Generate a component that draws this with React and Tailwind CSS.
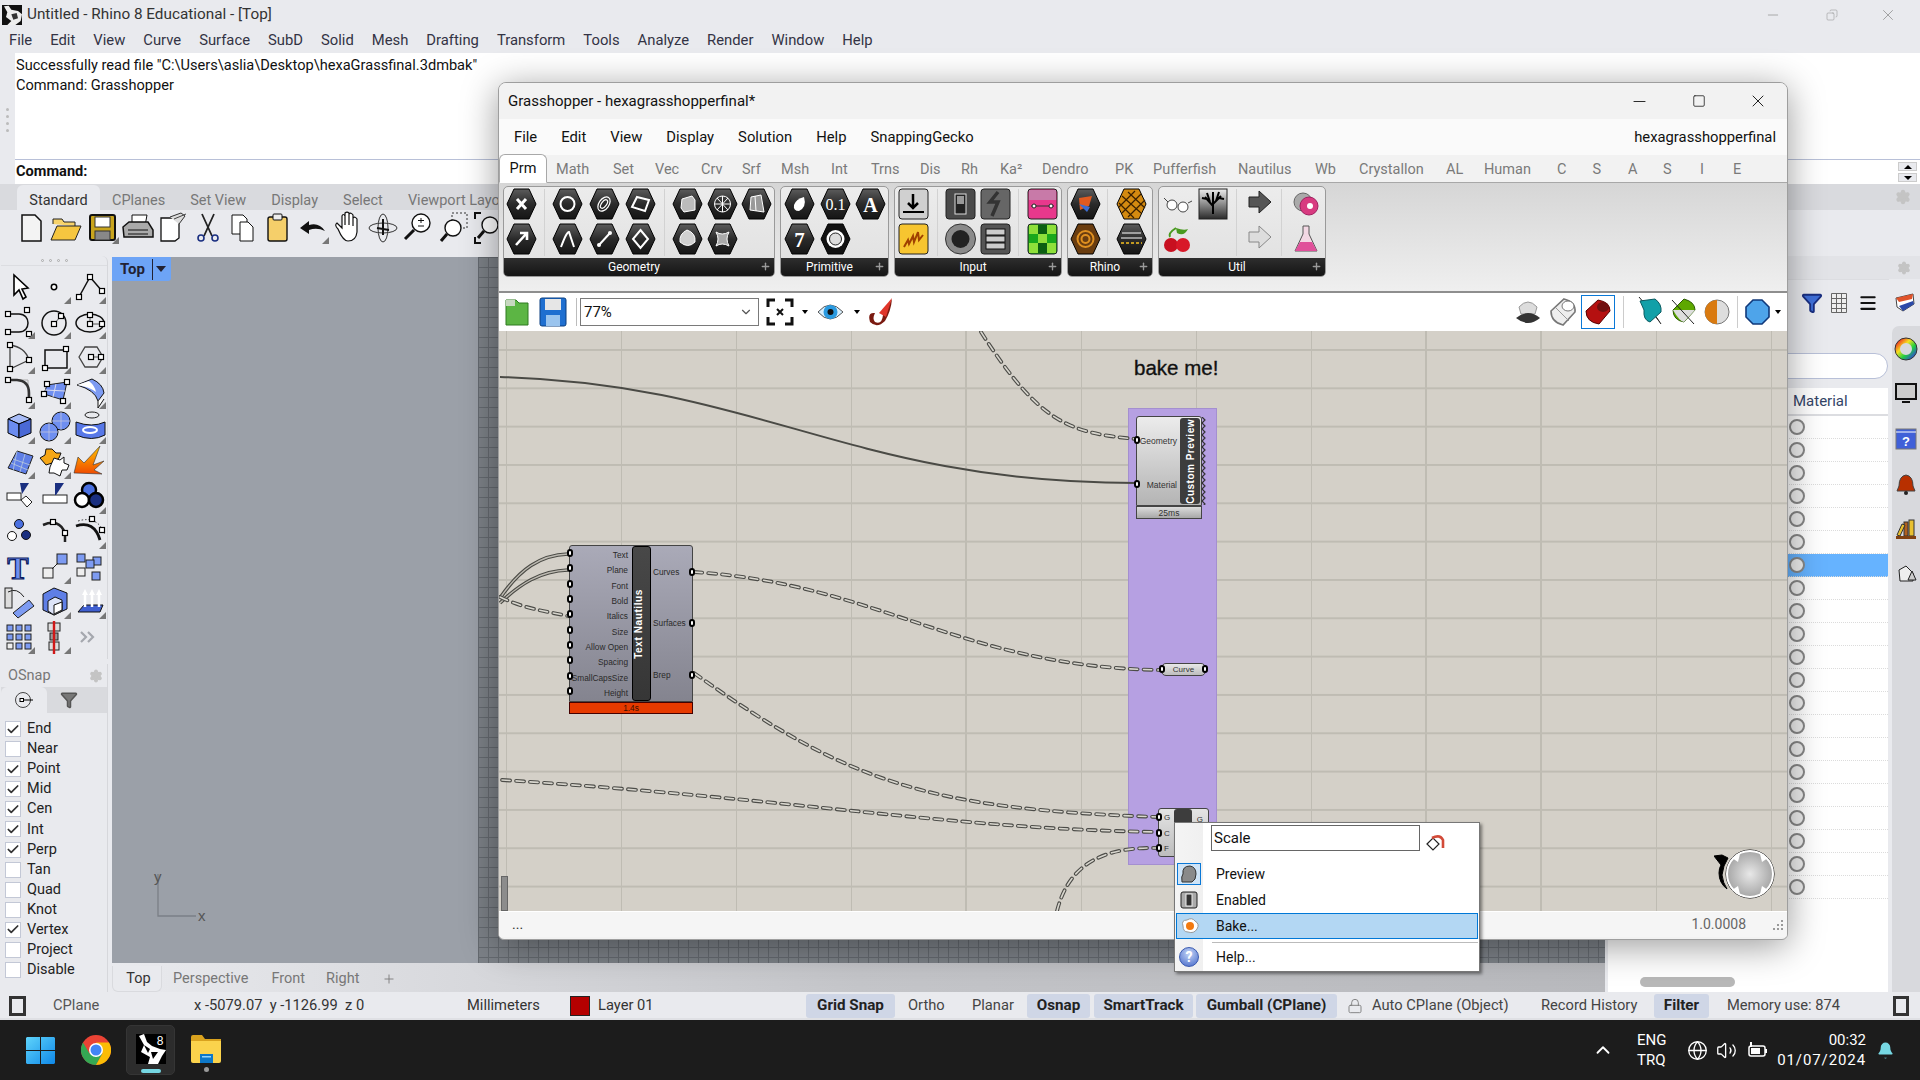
import { Minus, Square, X, Copy, ChevronUp, ChevronDown, Settings, Check, Filter, Menu as MenuIcon, Lock, Plus, Volume2, Globe, Bell } from "lucide-react";

const N = ({ x, y, s = 5 }) => <rect x={x - s / 2} y={y - s / 2} width={s} height={s} fill="#fff" stroke="#000" strokeWidth="1.2" />;
const S = { fill: "none", stroke: "#111", strokeWidth: 1.5 };

const leftIcons = [
  [0, <path d="M13 5V25L18 20L22 29L25 27L21 19L27 18Z" fill="#fff" stroke="#000" strokeWidth="1.6" />],
  [1, <circle cx="17" cy="17" r="2.7" fill="#fff" stroke="#000" strokeWidth="1.5" />],
  [1, <><path d="M7 27L18 7L30 21" {...S} /><N x={7} y={27} /><N x={18} y={7} /><N x={30} y={21} /></>],
  [1, <><path d="M7 9H18C30 9 30 27 18 27H7" {...S} /><N x={7} y={9} /><N x={7} y={27} /><N x={26} y={5} /><N x={28} y={29} /></>],
  [1, <><circle cx="17" cy="18" r="12" {...S} /><path d="M17 19L24 11" stroke="#555" /><N x={17} y={19} /><N x={24} y={11} /></>],
  [1, <><ellipse cx="18" cy="18" rx="14" ry="9" {...S} /><path d="M18 10V19H30" stroke="#555" fill="none" /><N x={18} y={10} /><N x={18} y={19} /><N x={30} y={19} /></>],
  [1, <><path d="M9 5Q24 7 28 20L9 29Z" fill="none" stroke="#444" strokeWidth="1.3" /><N x={9} y={5} /><N x={28} y={20} /><N x={9} y={29} /></>],
  [1, <><rect x="8" y="10" width="22" height="18" {...S} /><N x={29} y={9} /><N x={8} y={28} /></>],
  [1, <><path d="M7 17L13 7H25L31 17L25 27H13Z" fill="none" stroke="#444" strokeWidth="1.3" /><path d="M19 17H29" stroke="#555" /><N x={19} y={17} /><N x={29} y={17} /></>],
  [1, <><path d="M7 5H27V24" fill="none" stroke="#aaa" /><path d="M7 5H16Q28 6 28 18V25" fill="none" stroke="#333" strokeWidth="2.5" /><N x={7} y={5} /><N x={28} y={25} /></>],
  [1, <><path d="M10 10L30 7L26 25L7 19Z" fill="#6f8ff0" stroke="#222" /><path d="M19 9L16 22M8 15L28 16" stroke="#dde" /><N x={10} y={9} /><N x={30} y={7} /><N x={26} y={26} /><N x={7} y={19} /></>],
  [1, <><path d="M5 10L20 4Q31 9 32 18L26 26Q23 15 5 10Z" fill="#7d9bf2" stroke="#111" /><path d="M5 10L17 6Q23 11 24 17Q18 12 5 10Z" fill="#fff" /><path d="M26 26V33L32 24" fill="#fff" stroke="#111" /></>],
  [1, <><path d="M7 9L18 4L30 9L18 14Z" fill="#a8bcf7" stroke="#000" /><path d="M7 9L18 14V28L7 23Z" fill="#6b8cf0" stroke="#000" /><path d="M30 9L18 14V28L30 23Z" fill="#4a69d6" stroke="#000" /></>],
  [1, <><circle cx="24" cy="11" r="9" fill="#6f8ff0" stroke="#111" /><circle cx="12" cy="22" r="9" fill="#6f8ff0" stroke="#111" /><path d="M24 2V20M15 11H33M12 13V31M3 22H21" stroke="#ccd" strokeWidth=".7" /></>],
  [1, <><ellipse cx="20" cy="5" rx="7" ry="3" fill="none" stroke="#222" /><path d="M4 12Q20 18 33 12V25Q20 32 4 25Z" fill="#5878e8" stroke="#111" /><ellipse cx="18" cy="20" rx="7" ry="3" fill="none" stroke="#fff" strokeWidth="2" /></>],
  [1, <><path d="M7 23L16 6L32 11L25 29Z" fill="#5f7fe6" stroke="#222" /><path d="M12 14L29 20M16 6L12 26M24 9L19 27M10 18L27 25" stroke="#bcd" strokeWidth=".8" /></>],
  [1, <><path d="M3 13L8 10L9 4L15 4L19 8L24 8L22 13L15 18L9 20Z" fill="#f5a615" stroke="#111" /><path d="M17 13L23 15L27 12L27 18L32 20L30 25L25 25L23 31L17 28L12 28L13 22Z" fill="#fff" stroke="#111" /></>],
  [0, <><defs><linearGradient id="xp" x1="0" y1="0" x2="0" y2="1"><stop offset="0" stopColor="#ffc200" /><stop offset="1" stopColor="#f04a00" /></linearGradient></defs><path d="M2 28L6 12L12 18L28 1L21 20L32 16L22 25L30 29Z" fill="url(#xp)" stroke="#333" strokeWidth=".6" /></>],
  [0, <><rect x="6" y="13" width="14" height="7" fill="#fff" stroke="#222" /><path d="M19 3H28L21 14Z" fill="#1a2f80" /><path d="M20 20L25 16L31 22L26 27Z" fill="#fff" stroke="#222" /></>],
  [0, <><rect x="6" y="15" width="24" height="8" fill="#fff" stroke="#222" /><path d="M18 3H27L19 15H18Z" fill="#1a2f80" /></>],
  [1, <><circle cx="17" cy="10" r="7" fill="#4a70e0" stroke="#000" strokeWidth="2.5" /><circle cx="10" cy="20" r="7" fill="#fff" stroke="#000" strokeWidth="2.5" /><circle cx="24" cy="20" r="7" fill="#1a2f80" stroke="#000" strokeWidth="2.5" /></>],
  [0, <><circle cx="18" cy="9" r="4.5" fill="#4a70e0" stroke="#111" /><circle cx="11" cy="21" r="4.5" fill="#fff" stroke="#111" /><circle cx="25" cy="20" r="4.5" fill="#1a2f80" stroke="#111" /></>],
  [0, <><path d="M6 10Q22 3 28 18L28 27" fill="none" stroke="#222" strokeWidth="2.5" /><N x={16} y={7} /><N x={28} y={18} /></>],
  [1, <><path d="M4 11Q22 5 28 25" fill="none" stroke="#111" strokeWidth="2.8" /><path d="M6 6Q26 0 33 20" fill="none" stroke="#333" strokeDasharray="1.5 2" /><N x={20} y={4} /><N x={30} y={15} /></>],
  [0, <text x="17" y="29" textAnchor="middle" fontFamily="Liberation Serif" fontWeight="700" fontSize="32" fill="#6f8ff0" stroke="#0a1a60" strokeWidth="1.2">T</text>],
  [1, <><rect x="6" y="18" width="10" height="10" fill="#eee" stroke="#222" /><rect x="20" y="4" width="10" height="10" fill="#7d9bf2" stroke="#222" /><path d="M15 19L21 13" stroke="#222" /></>],
  [0, <><rect x="5" y="4" width="8" height="8" fill="#7d9bf2" stroke="#222" /><rect x="21" y="7" width="8" height="8" fill="#7d9bf2" stroke="#222" /><rect x="14" y="10" width="8" height="8" fill="#7d9bf2" stroke="#222" /><rect x="5" y="18" width="8" height="8" fill="#eee" stroke="#222" /><rect x="20" y="22" width="8" height="8" fill="#7d9bf2" stroke="#222" /></>],
  [0, <><rect x="4" y="3" width="7" height="20" fill="#ddd" stroke="#222" /><path d="M7 7Q16 2 23 12" fill="none" stroke="#222" /><path d="M12 28L28 15L33 21L17 33Z" fill="#7d9bf2" stroke="#222" /></>],
  [1, <><path d="M6 9L17 3L30 8V24L17 30L6 25Z" fill="#5f7fe6" stroke="#111" /><path d="M11 16L18 12L25 15V26L17 30L11 26Z" fill="#dde4f8" stroke="#111" /><path d="M17 20L25 17V25L17 29Z" fill="#fff" stroke="#111" /></>],
  [1, <><path d="M6 27L12 20H31L28 27Z" fill="#3f5fd0" stroke="#111" /><path d="M13 22V8M20 22V8M27 22V8" stroke="#fff" strokeWidth="2.5" /><path d="M10 10L13 4L16 10ZM17 10L20 4L23 10ZM24 10L27 4L30 10Z" fill="#fff" /></>],
  [1, <><g fill="#7d9bf2" stroke="#222"><rect x="6" y="5" width="6" height="6" /><rect x="15" y="5" width="6" height="6" /><rect x="24" y="5" width="6" height="6" /><rect x="6" y="14" width="6" height="6" /><rect x="15" y="14" width="6" height="6" /><rect x="24" y="14" width="6" height="6" /><rect x="15" y="23" width="6" height="6" /><rect x="24" y="23" width="6" height="6" /></g><rect x="6" y="23" width="6" height="6" fill="#eee" stroke="#222" /></>],
  [1, <><rect x="11" y="3" width="12" height="8" fill="#ddd" stroke="#222" /><rect x="13" y="13" width="8" height="7" fill="#999" stroke="#222" /><rect x="12" y="22" width="10" height="8" fill="#ddd" stroke="#222" /><path d="M17 1V34" stroke="#d01818" strokeWidth="2.4" /></>],
  [0, <path d="M9 12L14 17L9 22M16 12L21 17L16 22" fill="none" stroke="#a5a8ae" strokeWidth="2.2" />],
];

const topIcons = [
  [0, <path d="M7 5H20L26 11V31H7Z" fill="#f3f3f3" stroke="#111" strokeWidth="1.5" />],
  [0, <><path d="M3 14V9H12L14 12H25V16" fill="#f7d36a" stroke="#222" /><path d="M1 30L7 16H31L25 30Z" fill="#f5c640" stroke="#222" /></>],
  [1, <><rect x="5" y="5" width="25" height="25" rx="2" fill="#c9a51d" stroke="#111" strokeWidth="2" /><rect x="10" y="7" width="15" height="10" fill="#fff" stroke="#333" /><rect x="10" y="21" width="15" height="9" fill="#888" stroke="#333" /></>],
  [0, <><path d="M12 5H27L25 16H12Z" fill="#fff" stroke="#111" /><path d="M3 17L9 12H28L33 20V27H4Z" fill="#aaa" stroke="#111" strokeWidth="1.5" /><path d="M8 20H28M8 24H28" stroke="#111" /></>],
  [0, <><path d="M6 8H24V28L20 31H6Z" fill="#fff" stroke="#111" strokeWidth="1.3" /><path d="M15 7L26 3L30 6L24 14" fill="#ddd" stroke="#333" /><path d="M19 9L31 4" stroke="#444" /></>],
  [0, <><path d="M12 4L22 26M24 4L14 26" stroke="#222" strokeWidth="1.8" /><circle cx="11" cy="28" r="3" fill="none" stroke="#1a2f80" strokeWidth="1.6" /><circle cx="25" cy="28" r="3" fill="none" stroke="#1a2f80" strokeWidth="1.6" /></>],
  [0, <><path d="M7 5H18L22 9V24H7Z" fill="#fff" stroke="#111" /><path d="M15 12H23L28 17V31H15Z" fill="#fff" stroke="#111" /></>],
  [0, <><rect x="8" y="7" width="19" height="24" rx="2" fill="#f5cf6a" stroke="#111" strokeWidth="1.4" /><rect x="13" y="4" width="9" height="6" rx="1" fill="#eee" stroke="#111" /></>],
  [1, <><path d="M5 18L14 11V15Q24 12 30 21Q22 17 14 20V24Z" fill="#111" /></>],
  [0, <path d="M8 19Q4 15 7 13L12 18V6Q13 3 15 6V15V3Q17 1 19 3V15V4Q21 2 23 5V16V8Q25 6 27 9V22Q26 31 18 31Q13 31 8 19Z" fill="#fff" stroke="#111" strokeWidth="1.2" />],
  [0, <><ellipse cx="18" cy="18" rx="14" ry="5" fill="none" stroke="#333" /><ellipse cx="18" cy="18" rx="5" ry="14" fill="none" stroke="#333" /><path d="M18 9V25M12 18L24 20" stroke="#111" strokeWidth="2" /></>],
  [0, <><circle cx="21" cy="13" r="9" fill="#fff" stroke="#111" strokeWidth="1.4" /><path d="M14 20L5 29" stroke="#111" strokeWidth="3" /><path d="M21 8V13M18 10.5H24M18 16H24" stroke="#111" /></>],
  [0, <><rect x="17" y="3" width="15" height="15" fill="none" stroke="#333" strokeDasharray="2 2" /><circle cx="18" cy="18" r="8" fill="#fff" stroke="#111" strokeWidth="1.4" /><path d="M12 24L6 31" stroke="#111" strokeWidth="3" /></>],
  [0, <><circle cx="20" cy="15" r="8" fill="#fff" stroke="#111" strokeWidth="1.4" /><path d="M14 21L8 28" stroke="#111" strokeWidth="3" /><path d="M5 9V3H11M35 9V3H29M5 27V33H11M35 27V33H29" fill="none" stroke="#111" strokeWidth="2" /></>],
];

function Ico({ icon, size = 35 }) {
  return (
    <svg width={size} height={size} viewBox="0 0 35 35">
      {icon[1]}
      {icon[0] ? <path d="M34 27V34H27Z" fill="#777" /> : null}
    </svg>
  );
}

function Hex({ children }) {
  return (
    <svg width="31" height="32" viewBox="0 0 31 32">
      <path d="M8 1H23L30 16L23 31H8L1 16Z" fill="url(#hexdark)" stroke="#000" strokeWidth="1" />
      {children}
    </svg>
  );
}

const W = { fill: "none", stroke: "#fff", strokeWidth: 2 };
const Sq = ({ children, bg = "url(#sqdark)" }) => (
  <svg width="31" height="32" viewBox="0 0 31 32">
    <rect x="1" y="1" width="29" height="30" rx="3" fill={bg} stroke="#222" />
    {children}
  </svg>
);

function RibbonGroup({ label, width, children }) {
  return (
    <div className={`${width} h-[91px] flex flex-col rounded-[5px] border border-[#9a9a9a] overflow-hidden bg-linear-to-b from-[#ececec] to-[#e0e0e0]`}>
      <div className="flex-1 relative flex">{children}</div>
      <div className="h-[18px] bg-linear-to-b from-[#2e2e2e] to-[#151515] flex items-center justify-center pr-[10px] relative">
        <span className="text-white text-[12px] leading-none">{label}</span>
        <span className="absolute right-[3px] top-[3px] text-[#9a9a9a]"><Plus size={11} strokeWidth={3} /></span>
      </div>
    </div>
  );
}

// one column of ribbon icons, two rows
function Col({ a, b, w = "w-[35px]" }) {
  return (
    <div className={`${w} flex flex-col items-center pt-[1px] gap-[3px]`}>
      <div className="h-[32px]">{a}</div>
      <div className="h-[32px]">{b}</div>
    </div>
  );
}
const Div = () => <div className="w-px bg-[#d2d2d2] my-[2px] mx-[5px]" />;

const wires = [
  "M981 333C1040 425 1070 434 1136 440",
  "M694 573C880 585 960 668 1161 671",
  "M694 674C850 785 930 810 1158 818",
  "M502 781C800 800 950 830 1158 833",
  "M1057 912C1070 860 1110 848 1158 849",
  "M500 598C525 610 545 612 568 617",
];

function Port({ cls }) {
  return <span className={`absolute w-[6px] h-[8px] rounded-full bg-white border-2 border-black ${cls}`} />;
}

const zigzag = "M1 0" + Array.from({ length: 15 }, (_, i) => `L4 ${i * 6 + 3}L1 ${i * 6 + 6}`).join("");

function Canvas() {
  return (
    <div className="h-[580px] relative overflow-hidden bg-[#d4d0c8] bg-[linear-gradient(to_right,#bfbcb3_2px,transparent_2px),linear-gradient(to_bottom,#bfbcb3_2px,transparent_2px)] bg-size-[115px_38.33px] bg-position-[6px_18px]">
      {/* purple group */}
      <div className="absolute left-[629px] top-[77px] w-[89px] h-[457px] bg-[#b6a0e2] border border-[#a48fd0]" />
      <svg className="absolute inset-0" width="1288" height="580" viewBox="499 332 1288 580">
        <path d="M500 378C760 385 850 484 1136 484" fill="none" stroke="#4a4a45" strokeWidth="2" />
        <path d="M500 599C520 570 540 556 568 555" fill="none" stroke="#4a4a45" strokeWidth="3.6" />
        <path d="M500 599C520 570 540 556 568 555" fill="none" stroke="#bdbab2" strokeWidth="1.4" />
        <path d="M500 604C520 585 540 572 568 571" fill="none" stroke="#4a4a45" strokeWidth="3.6" />
        <path d="M500 604C520 585 540 572 568 571" fill="none" stroke="#bdbab2" strokeWidth="1.4" />
        {wires.map((d) => (
          <g key={d} fill="none" strokeDasharray="8 6" strokeLinecap="round">
            <path d={d} stroke="#4c4c48" strokeWidth="3.8" />
            <path d={d} stroke="#d8d6ce" strokeWidth="1.6" />
          </g>
        ))}
      </svg>

      <span className="absolute left-[635px] top-[25px] text-[20.5px] leading-[24px] font-['Liberation_Sans',sans-serif] text-[#111] [-webkit-text-stroke:0.35px_#111]">bake me!</span>

      {/* Custom Preview node */}
      <div className="absolute left-[637px] top-[85px] w-[66px] h-[103px] text-[#333] text-[8.5px] font-['Liberation_Sans',sans-serif]">
        <div className="h-[90px] rounded-t-[3px] border border-[#444] bg-linear-to-b from-[#ececec] to-[#b4b4b4] relative">
          <span className="absolute right-[24px] top-[18px]">Geometry</span>
          <span className="absolute right-[24px] top-[62px]">Material</span>
          <div className="absolute right-[1px] top-[1px] bottom-[1px] w-[20px] bg-[#3d3d3d] rounded-[3px] flex items-center justify-center">
            <span className="[writing-mode:vertical-rl] rotate-180 whitespace-nowrap text-white font-bold text-[10px] tracking-[0.5px]">Custom Preview</span>
          </div>
          <Port cls="-left-[3px] top-[19px]" />
          <Port cls="-left-[3px] top-[63px]" />
          <svg className="absolute -right-[5px] top-0" width="5" height="88" viewBox="0 0 5 88"><path d={zigzag} fill="none" stroke="#333" strokeWidth="1.2" /></svg>
        </div>
        <div className="h-[13px] border border-[#444] bg-linear-to-b from-[#dcdcdc] to-[#a8a8a8] text-center leading-[12px]">25ms</div>
      </div>

      {/* Text Nautilus node */}
      <div className="absolute left-[70px] top-[214px] w-[124px] text-[8.3px] text-[#2a2a2a] font-['Liberation_Sans',sans-serif]">
        <div className="h-[157px] relative rounded-t-[3px] border border-[#444] bg-linear-to-b from-[#aaaab8] to-[#84848f]">
          <div className="absolute right-[64px] top-[2px] flex flex-col items-end">
            {["Text", "Plane", "Font", "Bold", "Italics", "Size", "Allow Open", "Spacing", "SmallCapsSize", "Height"].map((t) => (
              <span key={t} className="h-[15.35px] leading-[15px]">{t}</span>
            ))}
          </div>
          {[3, 18, 34, 49, 64, 80, 95, 110, 126, 141].map((t) => (
            <span key={t} className="absolute -left-[3px] w-[6px] h-[8px] rounded-full bg-white border-2 border-black" style={{ top: t }} />
          ))}
          <div className="absolute left-[62px] top-0 bottom-0 w-[19px] bg-linear-to-b from-[#484848] to-[#363636] border border-black rounded-[3px] flex items-center justify-center">
            <span className="[writing-mode:vertical-rl] rotate-180 whitespace-nowrap text-white font-bold text-[10px] tracking-[0.6px] pl-[6px]">Text Nautilus</span>
          </div>
          <span className="absolute left-[83px] top-[20px]">Curves</span>
          <span className="absolute left-[83px] top-[71px]">Surfaces</span>
          <span className="absolute left-[83px] top-[123px]">Brep</span>
          <Port cls="-right-[3px] top-[22px]" />
          <Port cls="-right-[3px] top-[73px]" />
          <Port cls="-right-[3px] top-[125px]" />
        </div>
        <div className="h-[12px] border border-[#400] bg-[#e63a00] text-center leading-[11px] text-[#3a1000]">1.4s</div>
      </div>

      {/* Curve param */}
      <div className="absolute left-[662px] top-[332px] w-[45px] h-[13px] rounded-[5px] border border-[#444] bg-linear-to-b from-[#e8e8e8] to-[#bdbdbd] text-center leading-[11px] text-[8px] text-[#333] font-['Liberation_Sans',sans-serif]">
        Curve
        <Port cls="-left-[3px] top-[1px]" />
        <Port cls="-right-[3px] top-[1px]" />
      </div>

      {/* Scale node, mostly under the menu */}
      <div className="absolute left-[659px] top-[477px] w-[51px] h-[49px] rounded-[3px] border border-[#444] bg-linear-to-b from-[#e4e4e4] to-[#bdbdbd] text-[8px] text-[#333] font-['Liberation_Sans',sans-serif]">
        <span className="absolute left-[5px] top-[3px]">G</span>
        <span className="absolute left-[5px] top-[19px]">C</span>
        <span className="absolute left-[5px] top-[34px]">F</span>
        <span className="absolute right-[5px] top-[5px]">G</span>
        <div className="absolute left-[15px] top-0 bottom-0 w-[18px] bg-[#3d3d3d] rounded-[3px]" />
        <Port cls="-left-[3px] top-[4px]" />
        <Port cls="-left-[3px] top-[20px]" />
        <Port cls="-left-[3px] top-[35px]" />
      </div>

      {/* navigation dial */}
      <svg className="absolute left-[1215px] top-[510px]" width="62" height="62" viewBox="0 0 62 62">
        <defs>
          <radialGradient id="dial"><stop offset="0" stopColor="#e8e8e8" /><stop offset="1" stopColor="#a4a4a4" /></radialGradient>
        </defs>
        <path d="M0 15L8 14L14 17L10 25L8 34Q9 42 13 48Q5 42 5 32Q5 27 7 24Z" fill="#000" strokeWidth="1" stroke="#000" />
        <circle cx="36" cy="33" r="24" fill="url(#dial)" stroke="#000" strokeWidth="1" />
        <circle cx="36" cy="33" r="23" fill="none" stroke="#fff" strokeWidth="2" />
        <path d="M46 13L54 17L48 21ZM18 17L26 13L24 21ZM54 49L46 53L48 45ZM18 49L26 53L24 45Z" fill="#fff" />
      </svg>

      <div className="absolute left-[2px] top-[545px] w-[7px] h-[35px] bg-[#8c8c8c] border border-[#666]" />
    </div>
  );
}

function GrasshopperWindow() {
  const tabs = [
    ["Math", "w-[57px]"], ["Set", "w-[42px]"], ["Vec", "w-[46px]"], ["Crv", "w-[41px]"], ["Srf", "w-[39px]"], ["Msh", "w-[50px]"],
    ["Int", "w-[40px]"], ["Trns", "w-[49px]"], ["Dis", "w-[41px]"], ["Rh", "w-[39px]"], ["Ka²", "w-[42px]"], ["Dendro", "w-[73px]"],
    ["PK", "w-[38px]"], ["Pufferfish", "w-[85px]"], ["Nautilus", "w-[77px]"], ["Wb", "w-[44px]"], ["Crystallon", "w-[87px]"], ["AL", "w-[38px]"],
    ["Human", "w-[73px]"], ["C", "w-[35.5px]"], ["S", "w-[35.5px]"], ["A", "w-[35px]"], ["S", "w-[37px]"], ["I", "w-[33px]"], ["E", ""],
  ];
  return (
    <div className="absolute left-[498px] top-[82px] w-[1290px] h-[858px] flex flex-col rounded-t-[8px] rounded-b-[6px] border border-[#9e9e9e] bg-[#f2f2f2] shadow-[0_6px_36px_rgba(0,0,0,0.4)] overflow-hidden text-[#111]">
      <div className="h-[36px] flex items-center justify-between pl-[9px] bg-[#f2f2f2]">
        <span className="text-[15px]">Grasshopper - hexagrasshopperfinal*</span>
        <div className="flex items-center text-[#222]">
          <span className="w-[59px] flex justify-center"><Minus size={19} strokeWidth={1.2} /></span>
          <span className="w-[59px] flex justify-center"><Square size={14} strokeWidth={1.4} /></span>
          <span className="w-[59px] flex justify-center"><X size={20} strokeWidth={1.2} /></span>
        </div>
      </div>
      <div className="h-[36px] flex items-center justify-between pl-[15px] pr-[11px] bg-[#fafafa] text-[14.8px]">
        <div className="flex gap-[24px]">
          {["File", "Edit", "View", "Display", "Solution", "Help", "SnappingGecko"].map((m) => <span key={m}>{m}</span>)}
        </div>
        <span>hexagrasshopperfinal</span>
      </div>
      <div className="h-[28px] flex items-end bg-[#f2f2f2] relative border-b border-[#a8a8a8]">
        <div className="w-[48px] h-[29px] -mb-px bg-white rounded-t-[6px] border border-[#a8a8a8] border-b-white flex items-center justify-center text-[14.5px] z-10">Prm</div>
        <div className="flex items-center h-[28px] pl-[9px] pt-[4px] text-[14.5px] text-[#7a7a7a]">
          {tabs.map(([t, m], i) => <span key={i} className={`${m} shrink-0`}>{t}</span>)}
        </div>
      </div>
      <div className="h-[110px] flex gap-[5px] pl-[4px] pt-[3px] bg-linear-to-b from-[#d6d6d6] to-[#efefef] border-b-2 border-[#8e8e8e]">
        <RibbonGroup label="Geometry" width="w-[272px]">
          <Col a={<Hex><path d="M11 11L20 21M20 11L11 21" {...W} strokeWidth="3" /></Hex>} b={<Hex><path d="M10 22L20 11M14 10H21V17" {...W} strokeWidth="2.6" /></Hex>} />
          <Div />
          <Col w="w-[37px]" a={<Hex><circle cx="15.5" cy="16" r="7" {...W} /></Hex>} b={<Hex><path d="M9 24Q15 8 17 9L22 24" {...W} /></Hex>} />
          <Col w="w-[37px]" a={<Hex><ellipse cx="15" cy="16" rx="5" ry="8" transform="rotate(35 15 16)" {...W} strokeWidth="1.2" /><ellipse cx="15" cy="16" rx="2.5" ry="5" transform="rotate(35 15 16)" {...W} strokeWidth="1.2" /></Hex>} b={<Hex><path d="M10 22L21 10" {...W} /><circle cx="10" cy="22" r="2" fill="#fff" /><circle cx="21" cy="10" r="2" fill="#fff" /></Hex>} />
          <Col w="w-[37px]" a={<Hex><path d="M12 9L24 12L20 23L7 19Z" {...W} /></Hex>} b={<Hex><path d="M15.5 7L23 16L15.5 25L8 16Z" {...W} /></Hex>} />
          <Div />
          <Col a={<Hex><path d="M10 11L20 8L23 12V22L12 24L9 20Z" fill="#bbb" stroke="#fff" /></Hex>} b={<Hex><path d="M15 7Q24 10 23 19Q16 26 8 19Q7 11 15 7Z" fill="#d0d0d0" stroke="#fff" /></Hex>} />
          <Col a={<Hex><circle cx="15.5" cy="16" r="8" {...W} strokeWidth="1" /><path d="M8 16H23M15.5 8V24M10 10L21 22M21 10L10 22" stroke="#fff" strokeWidth="1" /></Hex>} b={<Hex><path d="M9 9Q15 13 22 9Q18 16 22 23Q15 19 9 23Q13 16 9 9Z" fill="#aaa" stroke="#fff" /></Hex>} />
          <Col a={<Hex><path d="M10 9L20 7L23 24L9 22Z" fill="#999" stroke="#fff" /><path d="M14 8L15 23" stroke="#fff" /></Hex>} b={null} />
        </RibbonGroup>
        <RibbonGroup label="Primitive" width="w-[109px]">
          <Col w="w-[36px]" a={<Hex><path d="M20 9Q23 19 15 23Q9 23 10 17Q12 11 20 9Z" fill="#fff" /></Hex>} b={<Hex><text x="15.5" y="24" textAnchor="middle" fontSize="21" fontWeight="700" fill="#fff" fontFamily="Liberation Serif">7</text></Hex>} />
          <Col w="w-[36px]" a={<Hex><text x="15.5" y="22" textAnchor="middle" fontSize="16" fill="#fff" fontFamily="Liberation Serif">0.1</text></Hex>} b={<svg width="31" height="32" viewBox="0 0 31 32"><path d="M8 1H23L30 16L23 31H8L1 16Z" fill="#111" stroke="#000" /><circle cx="15.5" cy="16" r="9" fill="#fff" /><circle cx="15.5" cy="16" r="6" fill="#ddd" stroke="#222" /></svg>} />
          <Col w="w-[34px]" a={<Hex><text x="15.5" y="24" textAnchor="middle" fontSize="20" fontWeight="700" fill="#fff" fontFamily="Liberation Serif">A</text></Hex>} b={null} />
        </RibbonGroup>
        <RibbonGroup label="Input" width="w-[168px]">
          <Col w="w-[38px]" a={<Sq bg="#d0d0d0"><path d="M15 6V19M10 15L15 20L20 15" fill="none" stroke="#000" strokeWidth="2.5" /><path d="M5 24H26" stroke="#000" strokeWidth="2" /></Sq>} b={<Sq bg="#f7c530"><path d="M6 24L10 17L11 21L15 13L16 19L20 9L21 17L25 12" fill="none" stroke="#a04000" strokeWidth="2" /></Sq>} />
          <Div />
          <Col a={<Sq bg="#4a4a4a"><rect x="10" y="6" width="11" height="20" fill="#222" stroke="#ddd" /><rect x="12" y="8" width="7" height="8" fill="#999" /></Sq>} b={<svg width="31" height="32" viewBox="0 0 31 32"><circle cx="15.5" cy="16" r="15" fill="#8a8a8a" stroke="#333" /><circle cx="15.5" cy="16" r="9" fill="#222" /></svg>} />
          <Col a={<Sq bg="#666"><path d="M18 4L10 14H18L12 28" fill="none" stroke="#333" strokeWidth="3.5" /></Sq>} b={<Sq bg="#555"><rect x="6" y="6" width="19" height="6" fill="#ccc" stroke="#111" /><rect x="6" y="13" width="19" height="6" fill="#ccc" stroke="#111" /><rect x="6" y="20" width="19" height="6" fill="#ccc" stroke="#111" /></Sq>} />
          <Div />
          <Col w="w-[38px]" a={<Sq bg="#e8388c"><rect x="2" y="2" width="27" height="10" fill="#c87aa8" /><path d="M4 18H27" stroke="#333" /><circle cx="7" cy="18" r="2" fill="#fff" stroke="#222" /><circle cx="24" cy="18" r="2" fill="#fff" stroke="#222" /></Sq>} b={<Sq bg="#19a81c"><path d="M2 2H11V11H2ZM20 2H29V11H20ZM11 11H20V20H11ZM2 20H11V30H2ZM20 20H29V30H20Z" fill="#8fe03a" /><path d="M11 2H20V11H11ZM11 20H20V30H11Z" fill="#0c5f12" /></Sq>} />
        </RibbonGroup>
        <RibbonGroup label="Rhino" width="w-[86px]">
          <Col w="w-[34px]" a={<Hex><path d="M9 10L22 8L19 18L10 22Z" fill="#e05a20" /><path d="M9 16L20 19L17 24Z" fill="#3c6cd0" /></Hex>} b={<svg width="31" height="32" viewBox="0 0 31 32"><path d="M8 1H23L30 16L23 31H8L1 16Z" fill="#6a3d10" stroke="#000" /><circle cx="15.5" cy="16" r="8" fill="none" stroke="#e09020" strokeWidth="2" /><circle cx="15.5" cy="16" r="4" fill="none" stroke="#e09020" strokeWidth="2" /></svg>} />
          <Div />
          <Col w="w-[36px]" a={<svg width="31" height="32" viewBox="0 0 31 32"><path d="M8 1H23L30 16L23 31H8L1 16Z" fill="#d48a10" stroke="#000" /><path d="M6 8L25 25M12 4L29 20M3 15L18 30M25 6L6 25M19 3L3 19M29 12L12 29" stroke="#3a2000" strokeWidth="1.2" /></svg>} b={<Hex><path d="M6 10H25M5 15H26" stroke="#fff" /><path d="M5 20H26" stroke="#f5c020" strokeWidth="1.5" strokeDasharray="3 2" /></Hex>} />
        </RibbonGroup>
        <RibbonGroup label="Util" width="w-[168px]">
          <Col w="w-[36px]" a={<svg width="31" height="32" viewBox="0 0 31 32"><circle cx="10" cy="17" r="5" fill="#fff" stroke="#444" /><circle cx="21" cy="19" r="5" fill="#fff" stroke="#444" /><path d="M2 10L6 14M26 15L30 13" stroke="#444" /></svg>} b={<svg width="31" height="32" viewBox="0 0 31 32"><path d="M14 5Q6 10 8 14" fill="none" stroke="#4a9a20" strokeWidth="2" /><path d="M14 5Q22 8 26 6Q22 14 15 10Z" fill="#4a9a20" /><circle cx="9" cy="22" r="7" fill="#c81020" /><circle cx="21" cy="22" r="7" fill="#d81828" /></svg>} />
          <Col w="w-[36px]" a={<svg width="30" height="32" viewBox="0 0 30 32"><rect x="1" y="1" width="28" height="30" fill="url(#sqdark)" stroke="#222" /><path d="M15 26V14M15 18L7 9M15 16L23 8M12 14L9 5M18 13L21 4M9 11L4 10M21 10L26 11M15 14V4" fill="none" stroke="#000" strokeWidth="2" /></svg>} b={null} />
          <Div />
          <Col w="w-[34px]" a={<svg width="27" height="28" viewBox="0 0 27 28"><path d="M3 9H13V3L25 14L13 25V19H3Z" fill="#555" stroke="#222" /></svg>} b={<svg width="27" height="28" viewBox="0 0 27 28"><path d="M3 9H13V3L25 14L13 25V19H3Z" fill="#ddd" stroke="#888" /></svg>} />
          <Div />
          <Col w="w-[36px]" a={<svg width="31" height="32" viewBox="0 0 31 32"><circle cx="13" cy="14" r="9" fill="#aaa" stroke="#666" /><circle cx="19" cy="18" r="9" fill="#d83a80" stroke="#a02060" /><circle cx="20" cy="18" r="3" fill="#fff" /></svg>} b={<svg width="31" height="32" viewBox="0 0 31 32"><path d="M13 3H19V11L27 28H5L13 11Z" fill="#f3d8e4" stroke="#555" /><path d="M10 19H22L27 28H5Z" fill="#e0509a" /></svg>} />
        </RibbonGroup>
      </div>
      <div className="h-[38px] flex items-center bg-white pl-[6px] pr-[6px] relative">
        <svg width="24" height="30" viewBox="0 0 24 30"><path d="M1 3H11L14 6H23V28H1Z" fill="#5cb544" stroke="#2e7a20" /><path d="M1 3H10V9H1Z" fill="#c8d8c0" /></svg>
        <svg className="ml-[10px]" width="28" height="30" viewBox="0 0 28 30"><rect x="1" y="1" width="26" height="28" rx="2" fill="#1f6fd0" stroke="#0a3f80" /><rect x="6" y="2" width="16" height="11" fill="#e6e6e6" /><rect x="7" y="18" width="14" height="11" fill="#9ac4ee" /></svg>
        <div className="w-px h-[28px] bg-[#bcbcbc] ml-[9px] mr-[3px]" />
        <div className="w-[179px] shrink-0 h-[28px] border border-[#7a7a7a] flex items-center justify-between pl-[3px] pr-[5px] text-[15px]">
          77%<ChevronDown size={14} className="text-[#555]" />
        </div>
        <svg className="ml-[7px]" width="28" height="28" viewBox="0 0 28 28"><path d="M2 9V2H9M19 2H26V9M26 19V26H19M9 26H2V19" fill="none" stroke="#111" strokeWidth="3" /><path d="M11 11L17 17M17 11L11 17" stroke="#111" strokeWidth="2" /></svg>
        <span className="ml-[8px] w-0 h-0 border-x-[3px] border-t-[4px] border-x-transparent border-t-black" />
        <svg className="ml-[9px]" width="27" height="24" viewBox="0 0 27 24"><path d="M1 12Q13 -2 26 12Q13 26 1 12Z" fill="#d8eefc" stroke="#555" /><circle cx="13.5" cy="12" r="7" fill="#2a9ae0" /><circle cx="13.5" cy="12" r="3" fill="#111" /></svg>
        <span className="ml-[10px] w-0 h-0 border-x-[3px] border-t-[4px] border-x-transparent border-t-black" />
        <svg className="ml-[7px]" width="27" height="30" viewBox="0 0 27 30"><path d="M3 25Q0 15 8 16Q5 22 8 25Q15 28 16 18L25 2Q24 14 18 24Q10 32 3 25Z" fill="#7a1a10" /><path d="M12 16L25 1L19 20Z" fill="#e0352a" /></svg>
        <div className="flex-1" />
        <svg width="26" height="32" viewBox="0 0 26 32"><path d="M4 11Q13 1 22 11L20 18H6Z" fill="#dcdcdc" stroke="#999" /><path d="M1 22Q13 12 25 22Q13 32 1 22Z" fill="#333" /></svg>
        <svg className="ml-[7px]" width="30" height="32" viewBox="0 0 30 32"><path d="M3 15L16 3Q28 6 27 16L15 29Q3 26 3 15Z" fill="#eee" stroke="#777" strokeWidth="1.6" /><ellipse cx="20" cy="10" rx="6" ry="5" fill="#fff" stroke="#777" /><path d="M8 12L21 25" stroke="#999" /></svg>
        <div className="ml-[3px] w-[34px] h-[34px] border border-[#0a78d7] flex items-center justify-center">
          <svg width="30" height="30" viewBox="0 0 30 30"><path d="M3 14L15 3Q27 5 27 14L16 27Q3 25 3 14Z" fill="#b51010" stroke="#500" /><ellipse cx="20" cy="10" rx="6" ry="5" fill="#701010" /></svg>
        </div>
        <div className="w-px h-[32px] bg-[#ccc] mx-[8px]" />
        <svg className="ml-[5px]" width="26" height="32" viewBox="0 0 26 32"><path d="M2 1L20 22L24 28" stroke="#222" /><path d="M3 5L18 3Q25 8 24 16L13 26Q6 24 7 14Z" fill="#12a0a8" stroke="#0a5a60" /></svg>
        <svg className="ml-[7px]" width="26" height="32" viewBox="0 0 26 32"><path d="M3 14L14 3Q25 6 25 14L14 26Q3 24 3 14Z" fill="#5ea800" stroke="#2a5a00" /><path d="M3 14Q10 26 14 26L25 14Z" fill="#ddd" /><path d="M2 4L24 28" stroke="#222" /></svg>
        <svg className="ml-[8px]" width="26" height="30" viewBox="0 0 26 30"><circle cx="13" cy="15" r="12" fill="#ddd" stroke="#777" /><path d="M13 3A12 12 0 0 0 13 27Z" fill="#d97a10" /></svg>
        <div className="w-px h-[32px] bg-[#ccc] ml-[7px] mr-[7px]" />
        <svg width="25" height="28" viewBox="0 0 25 28"><path d="M8 2H17L24 9V19L17 26H8L1 19V9Z" fill="#4ea4ea" stroke="#10387a" strokeWidth="1.6" /></svg>
        <span className="ml-[5px] w-0 h-0 border-x-[3px] border-t-[4px] border-x-transparent border-t-black" />
      </div>
      <Canvas />
      <div className="h-[26px] bg-[#f5f5f5] flex items-center justify-between pl-[13px] pr-[4px] text-[#666] text-[14px] border-t border-white">
        <span className="text-[#333]">...</span>
        <div className="flex items-center gap-[27px]">
          <span>1.0.0008</span>
          <svg width="10" height="10" viewBox="0 0 10 10"><g fill="#999"><rect x="8" y="0" width="2" height="2" /><rect x="4" y="4" width="2" height="2" /><rect x="8" y="4" width="2" height="2" /><rect x="0" y="8" width="2" height="2" /><rect x="4" y="8" width="2" height="2" /><rect x="8" y="8" width="2" height="2" /></g></svg>
        </div>
      </div>
    </div>
  );
}

function ContextMenu() {
  return (
    <div className="absolute left-[1174px] top-[822px] w-[306px] h-[150px] bg-white border border-[#777] shadow-[2px_2px_3px_rgba(0,0,0,0.45)] text-[14px] text-[#111] flex">
      <div className="w-[28px] bg-linear-to-r from-[#f4f4f4] to-[#f0f0f0]" />
      <div className="absolute inset-0 flex flex-col">
        <div className="h-[37px] flex items-start pl-[36px] pt-[2px]">
          <div className="w-[209px] h-[26px] border border-[#666] flex items-center pl-[2px] text-[15px] bg-white">Scale</div>
          <svg className="ml-[5px] mt-[10px]" width="20" height="18" viewBox="0 0 20 18"><path d="M2 9L8 3L14 9L8 15Z" fill="#fff" stroke="#222" strokeWidth="1.2" /><path d="M7 3Q15 -1 18 5V13" fill="none" stroke="#d24a38" strokeWidth="2.6" /></svg>
        </div>
        <div className="h-[26px] mt-[1px] flex items-center pl-[2px]">
          <div className="w-[24px] h-[22px] border border-[#0a78d7] bg-[#cfe4f7] flex items-center justify-center">
            <svg width="20" height="20" viewBox="0 0 20 20"><path d="M3 18Q2 12 4 10Q3 2 11 2Q17 3 17 10Q17 16 13 18Z" fill="#8a8a8a" stroke="#333" /></svg>
          </div>
          <span className="ml-[15px]">Preview</span>
        </div>
        <div className="h-[26px] flex items-center pl-[5px]">
          <svg width="18" height="18" viewBox="0 0 18 18"><rect x="1" y="1" width="16" height="16" rx="2" fill="#aaa" stroke="#222" /><rect x="6" y="3" width="6" height="12" fill="#333" stroke="#eee" /></svg>
          <span className="ml-[18px]">Enabled</span>
        </div>
        <div className="h-[26px] mx-[1px] flex items-center pl-[3px] bg-[#b3d7f3] border border-[#0078d7]">
          <svg width="20" height="18" viewBox="0 0 20 18"><path d="M3 9Q1 3 7 3Q12 0 15 4Q20 7 17 12Q14 17 8 15Q3 15 3 9Z" fill="#fff" stroke="#999" /><circle cx="10" cy="9" r="4" fill="#f27a10" /></svg>
          <span className="ml-[16px]">Bake...</span>
        </div>
        <div className="h-px bg-[#bbb] ml-[37px] mr-[1px] mt-[3px]" />
        <div className="flex-1 flex items-center pl-[4px]">
          <span className="w-[20px] h-[20px] rounded-full bg-[radial-gradient(circle_at_50%_30%,#c4d6f7,#4467c8)] text-white font-bold text-[14px] flex items-center justify-center border border-[#3a5ab0]">?</span>
          <span className="ml-[17px]">Help...</span>
        </div>
      </div>
    </div>
  );
}

function Taskbar() {
  return (
    <div className="h-[60px] bg-[#1c1c1c] flex items-center text-white shrink-0 pl-[26px] pr-[25px]">
      <svg width="29" height="29" viewBox="0 0 29 29">
        <defs><linearGradient id="win" x1="0" y1="0" x2="1" y2="1"><stop offset="0" stopColor="#5fd4fb" /><stop offset="1" stopColor="#0f88e8" /></linearGradient></defs>
        <path d="M1 1H14V14H0V2ZM15 1H28L29 2V14H15ZM0 15H14V28H1L0 27ZM15 15H29V27L28 28H15Z" fill="url(#win)" />
      </svg>
      <svg className="ml-[26px]" width="30" height="30" viewBox="0 0 30 30">
        <circle cx="15" cy="15" r="15" fill="#ea4335" />
        <path d="M2 7.5A15 15 0 0 0 15 30L21.5 18.5H8.5Z" fill="#34a853" />
        <path d="M15 30A15 15 0 0 0 28 7.5H15L21.5 18.5Z" fill="#fbbc05" />
        <circle cx="15" cy="15" r="7" fill="#fff" />
        <circle cx="15" cy="15" r="5.5" fill="#4285f4" />
      </svg>
      <div className="ml-[15px] w-[49px] h-[50px] bg-[#2c2c2c] rounded-[5px] border border-[#353535] flex flex-col items-center pt-[8px]">
        <RhinoMark />
        <span className="mt-[5px] w-[20px] h-[4px] bg-[#76d7e3] rounded-full" />
      </div>
      <div className="ml-[16px] w-[30px] h-[50px] flex flex-col items-center pt-[9px]">
        <svg width="30" height="30" viewBox="0 0 30 30">
          <path d="M0 3Q0 1 2 1H11L14 5H30V8H0Z" fill="#d9a21e" />
          <path d="M0 7H30V27Q30 29 28 29H2Q0 29 0 27Z" fill="#fbd34c" />
          <rect x="9" y="20" width="13" height="9" fill="#0d78c9" />
          <rect x="11" y="22" width="9" height="1.5" fill="#8fd4ff" />
        </svg>
        <span className="mt-[3px] w-[5px] h-[5px] rounded-full bg-[#9a9a9a]" />
      </div>
      <div className="flex-1" />
      <ChevronUp size={22} strokeWidth={2} className="mr-[23px]" />
      <div className="flex flex-col text-[15px] leading-[20px] w-[43px]"><span>ENG</span><span>TRQ</span></div>
      <Globe size={21} strokeWidth={1.5} className="ml-[7px]" />
      <Volume2 size={21} strokeWidth={1.5} className="ml-[8px]" />
      <svg className="ml-[10px]" width="22" height="18" viewBox="0 0 22 18"><rect x="2" y="5" width="16" height="10" rx="2" fill="#1c1c1c" stroke="#fff" strokeWidth="1.5" /><rect x="4" y="7" width="9" height="6" fill="#fff" /><rect x="18" y="8" width="2" height="4" fill="#fff" /><path d="M4 1V6" stroke="#fff" strokeWidth="2" /></svg>
      <div className="ml-[9px] flex flex-col items-end text-[15px] leading-[20px] w-[88px]"><span>00:32</span><span className="tracking-[0.9px]">01/07/2024</span></div>
      <Bell size={19} fill="#76d7e3" strokeWidth={0} className="ml-[10px]" />
    </div>
  );
}

function RhinoMark() {
  return (
    <svg width="30" height="30" viewBox="0 0 30 30">
      <rect width="30" height="30" fill="#000" />
      <path d="M3 2L8 0L11 8L16 12L24 15L30 16L26 22L22 30H12L14 23L5 18L8 11Z" fill="#fff" />
      <path d="M8 11L14 15L12 19ZM15 18L22 18L17 25Z" fill="#000" />
      <text x="24" y="11" fontSize="12" fill="#fff" fontFamily="Liberation Sans" textAnchor="middle">8</text>
    </svg>
  );
}

const Pill = ({ children, cls }) => <span className={`${cls} h-[24px] flex items-center justify-center bg-[#cfd6e6] rounded-[3px] font-bold text-[#222] text-[15.2px]`}>{children}</span>;

function StatusBar() {
  return (
    <div className="h-[28px] flex items-center bg-[#e9eaee] border-b-2 border-[#dfe0e4] text-[14.7px] text-[#333] shrink-0 pl-[9px] pr-[10px] pt-[1px]">
      <span className="w-[17px] h-[20px] border-[3px] border-[#333] bg-[#e9eaee] mr-[27px]" />
      <span className="w-[141px] text-[#555]">CPlane</span>
      <span className="w-[273px] text-[#333] whitespace-pre">x -5079.07  y -1126.99  z 0</span>
      <span className="w-[103px] text-[#333]">Millimeters</span>
      <span className="w-[20px] h-[20px] bg-[#b40000] border border-[#222] mr-[8px]" />
      <span className="w-[208px] text-[#333]">Layer 01</span>
      <Pill cls="w-[89px]">Grid Snap</Pill>
      <span className="w-[77px] pl-[13px] text-[#444]">Ortho</span>
      <span className="w-[55px] text-[#444]">Planar</span>
      <Pill cls="w-[63px]">Osnap</Pill>
      <Pill cls="w-[99px] ml-[4px]">SmartTrack</Pill>
      <Pill cls="w-[141px] ml-[3px]">Gumball (CPlane)</Pill>
      <Lock size={16} strokeWidth={1.3} className="ml-[10px] text-[#777]" />
      <span className="ml-[9px] w-[169px] text-[#444]">Auto CPlane (Object)</span>
      <span className="w-[113px] text-[#444]">Record History</span>
      <Pill cls="w-[55px]">Filter</Pill>
      <span className="ml-[18px] w-[166px] text-[#444]">Memory use: 874</span>
      <span className="w-[16px] h-[20px] border-[3px] border-[#333]" />
    </div>
  );
}

function LeftPanel() {
  const snaps = [["End", 1], ["Near", 0], ["Point", 1], ["Mid", 1], ["Cen", 1], ["Int", 1], ["Perp", 1], ["Tan", 0], ["Quad", 0], ["Knot", 0], ["Vertex", 1], ["Project", 0], ["Disable", 0]];
  return (
    <div className="w-[112px] shrink-0 flex flex-col pt-[3px] pr-[4px] pl-[1px]">
      <div className="h-[403px] bg-[#e9eaee] rounded-t-[6px] border-r border-[#d6d7db]">
        <div className="h-[10px] flex justify-center items-center gap-[5px] border-b border-[#dcdde1]">
          {[0, 1, 2, 3].map((i) => <span key={i} className="w-[3px] h-[3px] rounded-full border border-[#aaa]" />)}
        </div>
        <div className="grid grid-cols-[35.5px_35.5px_35.5px] auto-rows-[35px] pt-[4px]">
          {leftIcons.map((ic, i) => <Ico key={i} icon={ic} />)}
        </div>
      </div>
      <div className="mt-[5px] flex-1 bg-[#e9eaee] border-r border-[#d6d7db]">
        <div className="h-[23px] flex items-center justify-between pl-[7px] pr-[4px] text-[14.5px] text-[#777]">
          OSnap<Settings size={14} className="text-[#c4c4c4]" fill="#c4c4c4" />
        </div>
        <div className="h-[26px] flex bg-[#d9dade]">
          <div className="w-[46px] bg-[#e9eaee] rounded-t-[6px] flex items-center justify-center">
            <svg width="22" height="18" viewBox="0 0 22 18"><circle cx="10" cy="9" r="7.5" fill="none" stroke="#444" /><rect x="7" y="7.5" width="3.5" height="3" fill="#fff" stroke="#000" /><path d="M10.5 9H20" stroke="#000" /></svg>
          </div>
          <div className="flex-1 flex items-center pl-[13px]">
            <Filter size={18} fill="#777" className="text-[#555]" />
          </div>
        </div>
        <div className="flex flex-col pt-[6px] pl-[1px]">
          {snaps.map(([t, on]) => (
            <div key={t} className="h-[20.08px] flex items-center pl-[3px] text-[14.5px] text-[#222]">
              <span className="w-[16px] h-[16px] bg-white border border-[#c3c8d6] flex items-center justify-center mr-[6px]">
                {on ? <Check size={15} strokeWidth={3} className="text-[#333]" /> : null}
              </span>
              {t}
            </div>
          ))}
        </div>
      </div>
    </div>
  );
}

function Viewport() {
  return (
    <div className="w-[1493px] shrink-0 flex flex-col pt-[4px]">
      <div className="flex-1 flex bg-[#9ba0a8] relative">
        <div className="w-[366px]">
          <div className="w-[59px] h-[24px] bg-[#6da4f6] rounded-br-[3px] flex items-center pl-[8px] font-bold text-[15px] text-[#223]">
            Top
            <span className="ml-[7px] h-[21px] w-px bg-[#223]" />
            <span className="ml-[3px] w-0 h-0 border-x-[5px] border-t-[6px] border-x-transparent border-t-[#223]" />
          </div>
        </div>
        <div className="flex-1 bg-[#7c8187] bg-[linear-gradient(to_right,#656a70_1px,transparent_1px),linear-gradient(to_bottom,#656a70_1px,transparent_1px)] bg-size-[10px_10px]" />
        <svg className="absolute left-[40px] top-[611px]" width="70" height="60" viewBox="0 0 70 60">
          <path d="M6 6V48H44" fill="none" stroke="#7b7f86" strokeWidth="1.3" />
          <text x="2" y="14" fontSize="15" fill="#555" fontFamily="Liberation Sans">y</text>
          <text x="46" y="53" fontSize="15" fill="#555" fontFamily="Liberation Sans">x</text>
        </svg>
      </div>
      <div className="h-[29px] flex items-end bg-linear-to-r from-[#e9eaee] via-[#c4c5c9] to-[#b8b9bd] text-[14.5px] text-[#777]">
        <div className="w-[50px] h-[26px] bg-[#e9eaee] rounded-b-[6px] flex items-center justify-center pl-[3px] text-[#333] border-x border-b border-[#d9dade]">Top</div>
        <span className="ml-[11px] h-[26px] flex items-center">Perspective</span>
        <span className="ml-[23px] h-[26px] flex items-center">Front</span>
        <span className="ml-[21px] h-[26px] flex items-center">Right</span>
        <span className="ml-[23px] h-[26px] flex items-center"><Plus size={14} strokeWidth={1.5} /></span>
      </div>
    </div>
  );
}

function RightPanel() {
  const rows = Array.from({ length: 21 }, (_, i) => i);
  return (
    <div className="flex-1 flex flex-col bg-[#e9eaee] pt-[3px]">
      <div className="h-[23px] bg-[#e2e3e7] flex items-center justify-end pr-[9px]">
        <Settings size={14} fill="#c4c4c4" className="text-[#c4c4c4]" />
      </div>
      <div className="flex-1 flex">
        <div className="flex-1 flex flex-col">
          <div className="h-[47px] flex items-center justify-end border-t border-[#dcdde1]">
            <Filter size={22} fill="#3f6fd8" className="text-[#1a2f80] mr-[8px]" />
            <svg className="mr-[11px]" width="16" height="20" viewBox="0 0 16 20"><path d="M.5 .5H15.5V19.5H.5ZM5.5 0V20M10.5 0V20M0 5.5H16M0 10.5H16M0 15.5H16" fill="#eee" stroke="#666" /></svg>
            <MenuIcon size={20} strokeWidth={2.5} className="text-[#111] mr-[11px]" />
          </div>
          <div className="h-[26px] mt-[27px] mr-[1px] bg-white border border-[#b8c0d8] rounded-r-[13px]" />
          <div className="h-[28px] mt-[9px] ml-[3px] mr-[1px] bg-white border-b-2 border-[#dcdde1] flex items-center pl-[185px] text-[15px] text-[#334466]">Material</div>
          <div className="flex-1 bg-white ml-[3px] mr-[1px] flex flex-col relative">
            {rows.map((r) => (
              <div key={r} className={`h-[23px] shrink-0 flex items-center pl-[181px] border-b border-dotted border-[#dcdcdc] ${r === 6 ? "bg-[#66b3ff]" : ""}`}>
                <span className="w-[16px] h-[16px] rounded-full border-2 border-[#888] bg-[#efefef]" />
              </div>
            ))}
            <div className="absolute left-[32px] bottom-[5px] w-[95px] h-[10px] rounded-full bg-[#b8b8b8]" />
          </div>
        </div>
        <div className="w-[31px] shrink-0 flex flex-col items-center">
          <div className="h-[47px] flex items-center justify-center">
            <svg width="24" height="24" viewBox="0 0 24 24"><path d="M3 7L20 3L21 13L10 20L4 16Z" fill="#fff" stroke="#444" /><path d="M3 7L20 3L19 8L6 11Z" fill="#e0532a" /><path d="M6 15L20 10L21 13L10 20Z" fill="#2c4aa8" /></svg>
          </div>
          <div className="flex-1 w-[28px] ml-[3px] bg-[#d8d9dd] rounded-tl-[7px] flex flex-col items-center pt-[11px] gap-[21px]">
            <svg width="24" height="24" viewBox="0 0 24 24"><circle cx="12" cy="12" r="8.5" fill="none" stroke="url(#wheel)" strokeWidth="5" /><circle cx="12" cy="12" r="11" fill="none" stroke="#333" strokeWidth="1" /></svg>
            <svg width="24" height="24" viewBox="0 0 24 24"><rect x="2" y="2" width="20" height="15" fill="#ccc" stroke="#111" strokeWidth="2" /><path d="M8 21H16V19H8Z" fill="#111" /></svg>
            <svg width="24" height="24" viewBox="0 0 24 24"><rect x="2" y="2" width="20" height="20" fill="#4060d8" stroke="#777" /><path d="M2 5H22" stroke="#fff" /><text x="12" y="19" textAnchor="middle" fontSize="13" fontWeight="700" fill="#fff" fontFamily="Liberation Sans">?</text></svg>
            <svg width="24" height="24" viewBox="0 0 24 24"><path d="M12 3Q19 4 19 14L21 19H3L5 14Q5 4 12 3Z" fill="#b83000" stroke="#444" /><circle cx="12" cy="21" r="2" fill="#222" /></svg>
            <svg width="24" height="24" viewBox="0 0 24 24"><rect x="15" y="3" width="5" height="16" fill="#e8c030" stroke="#333" /><rect x="10" y="5" width="4" height="14" fill="#b06020" stroke="#333" /><path d="M3 18L8 7L11 8L6 19Z" fill="#e8c030" stroke="#333" /><path d="M2 19H22V22H2Z" fill="#804010" /></svg>
            <svg width="24" height="24" viewBox="0 0 24 24"><path d="M5 8L12 4L19 11V19H6Z" fill="#eee" stroke="#222" /><path d="M14 18L18 9L22 18Z" fill="#ccc" stroke="#222" /></svg>
          </div>
        </div>
      </div>
    </div>
  );
}

export default function App() {
  const menu = ["File", "Edit", "View", "Curve", "Surface", "SubD", "Solid", "Mesh", "Drafting", "Transform", "Tools", "Analyze", "Render", "Window", "Help"];
  const toolTabs = ["CPlanes", "Set View", "Display", "Select", "Viewport Layout"];
  return (
    <div className="w-[1920px] h-[1080px] relative overflow-hidden flex flex-col bg-[#e9eaee] font-['Roboto',sans-serif] text-[#222]">
      <svg className="absolute w-0 h-0">
        <defs>
          <linearGradient id="hexdark" x1="0" y1="0" x2="0" y2="1"><stop offset="0" stopColor="#5c5c5c" /><stop offset=".5" stopColor="#2a2a2a" /><stop offset="1" stopColor="#151515" /></linearGradient>
          <linearGradient id="sqdark" x1="0" y1="0" x2="0" y2="1"><stop offset="0" stopColor="#ededed" /><stop offset="1" stopColor="#2a2a2a" /></linearGradient>
          <linearGradient id="wheel" x1="0" y1="0" x2="1" y2="1"><stop offset="0" stopColor="#f02020" /><stop offset=".35" stopColor="#f5e020" /><stop offset=".65" stopColor="#20d040" /><stop offset="1" stopColor="#3040e0" /></linearGradient>
        </defs>
      </svg>

      <div className="h-[27px] shrink-0 flex items-center justify-between pl-[2px] pt-[2px]">
        <div className="flex items-center">
          <RhinoMark2 />
          <span className="ml-[5px] text-[15.3px] text-[#333]">Untitled - Rhino 8 Educational - [Top]</span>
        </div>
        <div className="flex items-center text-[#8a8a8a]">
          <span className="w-[59px] flex justify-center"><Minus size={16} strokeWidth={1} /></span>
          <span className="w-[59px] flex justify-center"><Copy size={12} strokeWidth={1} className="-scale-x-100" /></span>
          <span className="w-[59px] flex justify-center pr-[5px]"><X size={18} strokeWidth={1} /></span>
        </div>
      </div>
      <div className="h-[26px] shrink-0 flex items-center gap-[18px] pl-[9px] text-[14.8px] text-[#334]">
        {menu.map((m) => <span key={m}>{m}</span>)}
      </div>

      <div className="h-[131px] shrink-0 flex">
        <div className="w-[15px] shrink-0 flex flex-col items-center justify-center gap-[4px] pt-[3px]">
          {[0, 1, 2, 3].map((i) => <span key={i} className="w-[3px] h-[3px] rounded-full bg-[#bbb]" />)}
        </div>
        <div className="flex-1 flex flex-col bg-white">
          <div className="h-[107px] border-b border-[#b8c0d8] pl-[1px] pt-[2px] text-[14.6px] leading-[20px] text-[#111]">
            <div>Successfully read file "C:\Users\aslia\Desktop\hexaGrassfinal.3dmbak"</div>
            <div>Command: Grasshopper</div>
          </div>
          <div className="flex-1 flex items-center justify-between pl-[1px] pr-[3px]">
            <span className="font-bold text-[14.6px] text-[#111]">Command:</span>
            <div className="flex flex-col gap-[2px] w-[19px]">
              <span className="h-[9px] bg-[#e9eaee] border border-[#ccc] flex items-center justify-center"><span className="w-0 h-0 border-x-[4px] border-b-[4px] border-x-transparent border-b-black" /></span>
              <span className="h-[9px] bg-[#e9eaee] border border-[#ccc] flex items-center justify-center"><span className="w-0 h-0 border-x-[4px] border-t-[4px] border-x-transparent border-t-black" /></span>
            </div>
          </div>
        </div>
      </div>

      <div className="h-[69px] shrink-0 flex flex-col pl-[15px]">
        <div className="h-[26px] flex items-end bg-[#d9dade] -ml-[15px] pl-[17px] justify-between text-[14.5px]">
          <div className="flex items-end">
            <div className="w-[83px] h-[25px] bg-[#e9eaee] rounded-t-[6px] flex items-center justify-center text-[#333] pt-[6px]">Standard</div>
            <div className="flex gap-[25px] pl-[12px] h-[25px] items-center text-[#777] pt-[6px]">
              {toolTabs.map((t) => <span key={t}>{t}</span>)}
            </div>
          </div>
          <Settings size={16} fill="#c4c4c4" className="text-[#c4c4c4] mr-[9px] mb-[5px]" />
        </div>
        <div className="flex-1 flex items-center pb-[8px]">
          {topIcons.map((ic, i) => <Ico key={i} icon={ic} />)}
        </div>
      </div>

      <div className="flex-1 flex min-h-0">
        <LeftPanel />
        <Viewport />
        <RightPanel />
      </div>
      <StatusBar />
      <Taskbar />

      <GrasshopperWindow />
      <ContextMenu />
    </div>
  );
}

function RhinoMark2() {
  return (
    <svg width="20" height="20" viewBox="0 0 30 30">
      <rect width="30" height="30" fill="#111" />
      <path d="M3 2L10 1L14 7L24 9L30 14L28 24L20 30H8L14 24L6 18L8 11Z" fill="#eee" />
      <path d="M14 14L22 12L24 20L17 22Z" fill="#333" />
    </svg>
  );
}
